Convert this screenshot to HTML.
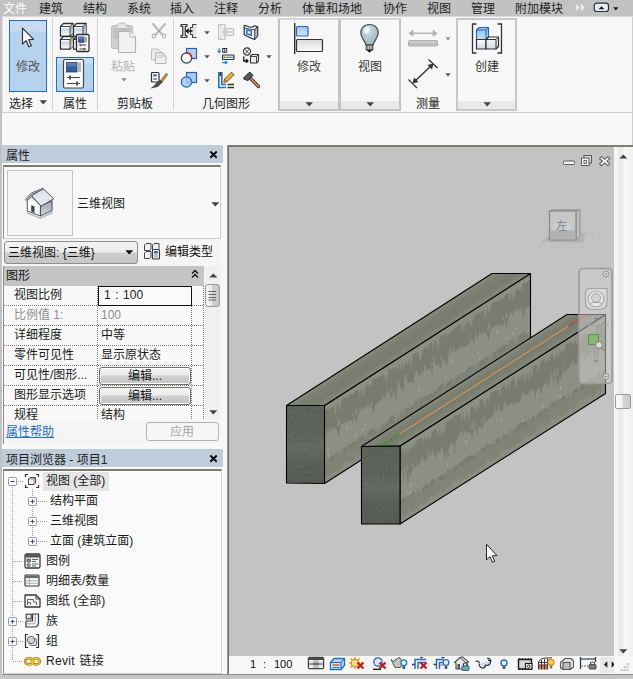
<!DOCTYPE html>
<html lang="zh-CN">
<head>
<meta charset="utf-8">
<title>Revit</title>
<style>
*{box-sizing:border-box;margin:0;padding:0}
html,body{width:633px;height:679px;overflow:hidden;background:#f0f0f0}
body{position:relative;font-family:"Liberation Sans","Noto Sans CJK SC",sans-serif;font-size:12px;color:#1a1a1a;line-height:1}
.abs{position:absolute}
.t{position:absolute;white-space:nowrap;font-size:12px;line-height:14px;height:14px}
/* menu bar */
#menubar{left:0;top:0;width:633px;height:17px;background:#c2c2c2;border-bottom:1px solid #d9d9d9;z-index:3}
#menubar .t{top:2px;color:#222}
/* ribbon */
#ribbon{left:0;top:16px;width:633px;height:97px;background:#f7f7f7;border-bottom:1px solid #cfcfcf}
.sep{position:absolute;top:2px;width:1px;height:92px;background:#d2d2d2}
.plabel{position:absolute;top:81px;font-size:12px;line-height:14px;white-space:nowrap;color:#222}
.cpanel{position:absolute;top:2px;height:93px;border:2px solid #c3c3c3;border-top:2px solid #d6d6d6;background:#f8f8f8}
.cstrip{position:absolute;left:0;right:0;bottom:0;height:8px;background:#e9e9e9}
.hl{position:absolute;left:0;width:200px;height:1px;background-image:linear-gradient(90deg,#7a7a7a 1px,transparent 1px);background-size:2px 1px}
.vl{position:absolute;top:0;height:140px;width:1px;background-image:linear-gradient(#7a7a7a 1px,transparent 1px);background-size:1px 2px}
.gbtn{position:absolute;left:95px;width:92px;height:18px;border:1px solid #70706a;border-radius:3px;background:linear-gradient(#f4f4f4 0,#ebebeb 7px,#d0d0d0 8px,#c6c6c6 100%);text-align:center;box-shadow:0 0 0 1px #fcfcfc inset}
.gbtn span{font-size:12px;line-height:14px;position:relative;top:1px;color:#111}
.vd{position:absolute;width:1px;background-image:linear-gradient(#9a9a9a 1px,transparent 1px);background-size:1px 2px}
.hd{position:absolute;height:1px;background-image:linear-gradient(90deg,#9a9a9a 1px,transparent 1px);background-size:2px 1px}
#optbar{left:0;top:113px;width:633px;height:32px;background:#f9f9f9}
/* panels */
.phead{position:absolute;left:2px;width:221px;height:18px;background:#bfccda;}
.phead .t{left:4px;top:4px;color:#1e1e1e}
.closex{position:absolute;left:207px;top:5px;width:9px;height:9px}
</style>
</head>
<body>
<!-- MENU BAR -->
<div id="menubar" class="abs">
  <span class="t" style="left:3px;color:#fff">文件</span>
  <span class="t" style="left:39px">建筑</span>
  <span class="t" style="left:83px">结构</span>
  <span class="t" style="left:127px">系统</span>
  <span class="t" style="left:170px">插入</span>
  <span class="t" style="left:214px">注释</span>
  <span class="t" style="left:258px">分析</span>
  <span class="t" style="left:302px">体量和场地</span>
  <span class="t" style="left:383px">协作</span>
  <span class="t" style="left:427px">视图</span>
  <span class="t" style="left:471px">管理</span>
  <span class="t" style="left:515px">附加模块</span>
  <svg class="abs" style="left:575px;top:3px" width="11" height="9" viewBox="0 0 11 9"><path d="M0.800 0.500 L4.800 4.500 L0.800 8.500 Z M5.800 0.500 L9.800 4.500 L5.800 8.500 Z" fill="#ececec"/></svg>
  <svg class="abs" style="left:593px;top:2px" width="17" height="11" viewBox="0 0 17 11"><rect x="1.200" y="1.200" width="14.300" height="8.300" rx="2.600" fill="#e6ecf3" stroke="#2a2f3a" stroke-width="1.200"/><path d="M5.500 7.200 H11.500 L8.500 4.200 Z" fill="#1a1e28"/></svg>
  <svg class="abs" style="left:613px;top:7px" width="6" height="4" viewBox="0 0 6 4"><path d="M0.200 0.200 H5.400 L2.800 3.400 Z" fill="#111"/></svg>
</div>
<!-- RIBBON -->
<div id="ribbon" class="abs">
  <!-- left edge -->
  <div class="abs" style="left:0;top:0;width:3px;height:96px;background:#e2e2e2"></div>
  <!-- Panel 1: select -->
  <div class="abs" style="left:9px;top:4px;width:38px;height:72px;border:1px solid #1e72cc;background:linear-gradient(#c8dcf0 0,#c8dcf0 10px,#b5d3ef 11px,#b5d3ef 100%)"></div>
  <svg class="abs" style="left:21px;top:11px" width="15" height="22" viewBox="0 0 15 22">
    <path d="M1.5 1.2 L1.5 17 L5.2 13.6 L7.8 19.8 L10.3 18.7 L7.7 12.7 L12.6 12.4 Z" fill="#fff" stroke="#333" stroke-width="1.2" stroke-linejoin="round"/>
  </svg>
  <span class="t" style="left:16px;top:44px;color:#555">修改</span>
  <span class="plabel" style="left:9px">选择</span>
  <svg class="abs" style="left:39px;top:84px" width="9" height="5" viewBox="0 0 9 5"><path d="M0.5 0.3 H8 L4.25 4.6 Z" fill="#444"/></svg>
  <div class="sep" style="left:52px"></div>

  <!-- Panel 2: properties -->
  <svg class="abs" style="left:59px;top:6px" width="32" height="32" viewBox="0 0 32 32">
    <defs>
      <linearGradient id="cb" x1="0" y1="0" x2="0" y2="1"><stop offset="0" stop-color="#ffffff"/><stop offset="0.300" stop-color="#c3d5ea"/><stop offset="0.550" stop-color="#dfe5ec"/><stop offset="1" stop-color="#f2f2f2"/></linearGradient>
      <linearGradient id="cs" x1="0" y1="0" x2="0" y2="1"><stop offset="0" stop-color="#9a9a9a"/><stop offset="1" stop-color="#e4e4e4"/></linearGradient>
    </defs>
    <path d="M14.5 17.5 L17.5 14.5 H27.0 V24.0 L24.0 27.0 H14.5 Z" fill="#fff" stroke="#2e2e2e" stroke-width="1.300" stroke-linejoin="round"/><rect x="15.1" y="18.1" width="8.3" height="8.3" fill="url(#cb)"/><path d="M24.0 17.5 L27.0 14.5 V24.0 L24.0 27.0 Z" fill="url(#cs)"/><path d="M14.5 17.5 H24.0 V27.0 M24.0 17.5 L27.0 14.5" fill="none" stroke="#2e2e2e" stroke-width="0.900"/>
    <path d="M1.5 17.5 L4.5 14.5 H14.0 V24.0 L11.0 27.0 H1.5 Z" fill="#fff" stroke="#2e2e2e" stroke-width="1.300" stroke-linejoin="round"/><rect x="2.1" y="18.1" width="8.3" height="8.3" fill="url(#cb)"/><path d="M11.0 17.5 L14.0 14.5 V24.0 L11.0 27.0 Z" fill="url(#cs)"/><path d="M1.5 17.5 H11.0 V27.0 M11.0 17.5 L14.0 14.5" fill="none" stroke="#2e2e2e" stroke-width="0.900"/>
    <path d="M14.5 4.5 L17.5 1.5 H27.0 V11.0 L24.0 14.0 H14.5 Z" fill="#fff" stroke="#2e2e2e" stroke-width="1.300" stroke-linejoin="round"/><rect x="15.1" y="5.1" width="8.3" height="8.3" fill="url(#cb)"/><path d="M24.0 4.5 L27.0 1.5 V11.0 L24.0 14.0 Z" fill="url(#cs)"/><path d="M14.5 4.5 H24.0 V14.0 M24.0 4.5 L27.0 1.5" fill="none" stroke="#2e2e2e" stroke-width="0.900"/>
    <path d="M1.5 4.5 L4.5 1.5 H14.0 V11.0 L11.0 14.0 H1.5 Z" fill="#fff" stroke="#2e2e2e" stroke-width="1.300" stroke-linejoin="round"/><rect x="2.1" y="5.1" width="8.3" height="8.3" fill="url(#cb)"/><path d="M11.0 4.5 L14.0 1.5 V11.0 L11.0 14.0 Z" fill="url(#cs)"/><path d="M1.5 4.5 H11.0 V14.0 M11.0 4.5 L14.0 1.5" fill="none" stroke="#2e2e2e" stroke-width="0.900"/>
    <rect x="17.500" y="12.500" width="12.500" height="17" rx="1.300" fill="#fbfbfb" stroke="#2e2e2e" stroke-width="1.300"/>
    <rect x="19.700" y="15" width="5.300" height="5.300" fill="#40609e" stroke="#22407a" stroke-width="0.800"/>
    <rect x="20" y="15.300" width="4.700" height="2" fill="#6f8fc8" opacity="0.700"/>
    <rect x="26" y="15" width="2" height="5.300" fill="#a8a8a8"/>
    <path d="M20.500 23 H27 M20.500 27 H27" stroke="#3a3a3a" stroke-width="1"/>
    <path d="M21.800 21.800 L20.600 23 L21.800 24.200 M25.200 25.800 V28.200" fill="none" stroke="#3a3a3a" stroke-width="1"/>
  </svg>
  <div class="abs" style="left:56px;top:41px;width:38px;height:35px;border:1px solid #1e72cc;background:linear-gradient(#c8dcf0 0,#c8dcf0 5px,#b5d3ef 6px,#b5d3ef 100%)"></div>
  <svg class="abs" style="left:62px;top:42px" width="23" height="32" viewBox="0 0 23 32">
    <rect x="1.500" y="1.500" width="20" height="28.500" rx="1.500" fill="#fbfbfb" stroke="#454545" stroke-width="1.200"/>
    <rect x="4.500" y="4.500" width="10.500" height="9.500" fill="#3b5c9c" stroke="#25427a" stroke-width="0.800"/>
    <rect x="4.900" y="4.900" width="9.700" height="3.500" fill="#6d8fc9" opacity="0.650"/>
    <rect x="16" y="4.500" width="3" height="9.500" fill="#b4b4b4"/>
    <path d="M5 19.500 H18 M5 25.500 H18" stroke="#4a4a4a" stroke-width="1.200"/>
    <path d="M8 17.500 V21.500 M15 23.500 V27.500" stroke="#4a4a4a" stroke-width="1.800"/>
  </svg>
  <span class="plabel" style="left:63px">属性</span>
  <div class="sep" style="left:97px"></div>

  <!-- Panel 3: clipboard -->
  <svg class="abs" style="left:110px;top:6px" width="28" height="34" viewBox="0 0 28 34">
    <rect x="1.500" y="3.500" width="21" height="23" rx="2" fill="#cfcfcf" stroke="#bdbdbd"/>
    <path d="M7 4.500 Q7 1 12 1 Q17 1 17 4.500 L18.500 4.500 V6.500 H5.500 V4.500 Z" fill="#e6e6e6" stroke="#b8b8b8"/>
    <rect x="3" y="7" width="18" height="10" fill="#bcbcbc" opacity="0.700"/>
    <path d="M8.500 9.500 H20 L25.500 15 V30.500 H8.500 Z" fill="#f1f1f1" stroke="#b4b4b4" stroke-width="1.200"/>
    <path d="M20 9.500 V15 H25.500" fill="#fafafa" stroke="#b4b4b4" stroke-width="1"/>
  </svg>
  <span class="t" style="left:111px;top:44px;color:#b4b4b4">粘贴</span>
  <svg class="abs" style="left:121px;top:62px" width="6" height="4" viewBox="0 0 6 4"><path d="M0.300 0.200 H5.700 L3 3.600 Z" fill="#8a8a8a"/></svg>
  <!-- scissors -->
  <svg class="abs" style="left:151px;top:7px" width="16" height="16" viewBox="0 0 16 16">
    <path d="M2 1 L12.500 13 M14 1 L3.500 13" stroke="#bdbdbd" stroke-width="2.200" stroke-linecap="round"/>
    <circle cx="3" cy="13" r="1.800" fill="#f4f4f4" stroke="#b5b5b5" stroke-width="1.200"/>
    <circle cx="13" cy="13" r="1.800" fill="#f4f4f4" stroke="#b5b5b5" stroke-width="1.200"/>
    <circle cx="8" cy="8" r="0.900" fill="#999"/>
  </svg>
  <!-- copy -->
  <svg class="abs" style="left:150px;top:31px" width="18" height="18" viewBox="0 0 18 18">
    <path d="M1.500 2 H8 L11 5 V13 H1.500 Z" fill="#ececec" stroke="#bcbcbc"/>
    <path d="M5.500 5.500 H12.500 L16 9 V16.500 H5.500 Z" fill="#f0f0f0" stroke="#b6b6b6"/>
    <path d="M12.500 5.500 V9 H16" fill="none" stroke="#b6b6b6"/>
    <rect x="6.500" y="6.500" width="6" height="5" fill="#dcdcdc"/>
  </svg>
  <!-- match type -->
  <svg class="abs" style="left:150px;top:55px" width="18" height="18" viewBox="0 0 18 18">
    <rect x="1.500" y="1.500" width="7.500" height="9.500" rx="1" fill="#f8f8f8" stroke="#2c2c2c" stroke-width="1.200"/>
    <rect x="3.300" y="3.300" width="3.500" height="2.200" fill="#3c6bb0"/>
    <path d="M3.300 8 H7 M5 7 V9" stroke="#556" stroke-width="0.900"/>
    <path d="M16.500 2 L10.500 9.500 L12.300 11 L17.500 4 Z" fill="#c98b3c" stroke="#7a5423" stroke-width="0.600"/>
    <path d="M10.500 9.500 L12.300 11 L8 15.500 L1.500 17 Q5 14.500 6.500 12 Z" fill="#4a4a4a" stroke="#2b2b2b" stroke-width="0.600"/>
  </svg>
  <span class="plabel" style="left:117px">剪贴板</span>
  <div class="sep" style="left:173px"></div>
  <!-- Panel 4: geometry -->
  <!-- cope -->
  <svg class="abs" style="left:180px;top:7px" width="18" height="17" viewBox="0 0 18 17">
    <path d="M1 1.500 H7 V3.500 H5.300 V12.500 H7 V14.500 H1 V12.500 H2.700 V3.500 H1 Z" fill="#d9d9d9" stroke="#333" stroke-width="1.100" stroke-linejoin="round"/>
    <path d="M16.500 1.500 H12.500 V4.500 H10.500 V11.500 H12.500 V14.500 H16.500" fill="#dfe6ee" stroke="#444" stroke-width="1.100"/>
    <path d="M12.500 8 H6.500 M8.800 5.600 L6.300 8 L8.800 10.400" fill="none" stroke="#111" stroke-width="1.300"/>
  </svg>
  <svg class="abs" style="left:204px;top:15px" width="6" height="4" viewBox="0 0 6 4"><path d="M0.300 0.200 H5.700 L3 3.600 Z" fill="#555"/></svg>
  <!-- cut (gray) -->
  <svg class="abs" style="left:217px;top:7px" width="18" height="18" viewBox="0 0 18 18">
    <path d="M1.500 1.500 H8 V5.500 H16.500 V12.500 H8 V16.500 H1.500 Z" fill="#ebebeb" stroke="#c2c2c2" stroke-width="1.100"/>
    <path d="M14.500 9 H6.500 M9.500 6 L6 9 L9.500 12" fill="none" stroke="#c6c6c6" stroke-width="1.600"/>
    <path d="M2 2 L8 9 L2 16" fill="none" stroke="#d6d6d6" stroke-width="0.800"/>
  </svg>
  <!-- wall joins -->
  <svg class="abs" style="left:243px;top:7px" width="17" height="18" viewBox="0 0 17 18">
    <path d="M1.200 2.300 Q4 2.600 7 4.200 Q9.500 4.600 11.700 2.800 L14.600 3.700 V12.900 L11.500 16.500 Q6 14.500 1.200 11.800 Z" fill="#eef1f5" stroke="#2a3344" stroke-width="1.200" stroke-linejoin="round"/>
    <path d="M11.700 6.800 V16.300 L14.600 12.900 V3.700 Z" fill="#b8bfca" stroke="#2a3344" stroke-width="0.900" stroke-linejoin="round"/>
    <path d="M1.200 4.800 Q6 6.500 11.700 6.800 L14.600 3.700" fill="none" stroke="#2a3344" stroke-width="0.900"/>
    <path d="M3.700 6.800 L8.400 8 V12.400 L3.700 11 Z" fill="#8fc0ee" stroke="#1a62b8" stroke-width="1.100" stroke-linejoin="round"/>
    <path d="M5 8.300 L7.200 8.900 V10.900 L5 10.300 Z" fill="#e6f0fa"/>
  </svg>
  <!-- cut geometry -->
  <svg class="abs" style="left:180px;top:31px" width="18" height="18" viewBox="0 0 18 18">
    <rect x="6.500" y="1.500" width="10" height="10" fill="#b4d2f0" stroke="#1c66c0" stroke-width="1.200"/>
    <circle cx="6.500" cy="11" r="5.200" fill="#fafafa" stroke="#2d3a4a" stroke-width="1.200"/>
    <path d="M6.500 5.800 A5.200 5.200 0 0 1 11.700 11" fill="none" stroke="#e11" stroke-width="1.400"/>
  </svg>
  <svg class="abs" style="left:204px;top:39px" width="6" height="4" viewBox="0 0 6 4"><path d="M0.300 0.200 H5.700 L3 3.600 Z" fill="#555"/></svg>
  <!-- beam joins -->
  <svg class="abs" style="left:217px;top:31px" width="18" height="18" viewBox="0 0 18 18">
    <path d="M2.200 1.200 V5.500 M0.700 3.800 L2.200 5.600 L3.700 3.800" fill="none" stroke="#1f8af0" stroke-width="1.300"/>
    <rect x="5.700" y="1.500" width="4" height="3.800" fill="#f4f4f4" stroke="#333" stroke-width="1"/>
    <path d="M7.700 1.500 V5.300" stroke="#333" stroke-width="0.900"/>
    <rect x="5.500" y="8" width="11.500" height="4.500" rx="0.500" fill="#ececec" stroke="#333" stroke-width="1.100"/>
    <path d="M6.500 10.250 H16.500" stroke="#222" stroke-width="0.900" stroke-dasharray="2 1"/>
    <path d="M5.300 15.500 H9.800 M8.200 14 L10 15.500 L8.200 17" fill="none" stroke="#1f8af0" stroke-width="1.300"/>
  </svg>
  <!-- split face -->
  <svg class="abs" style="left:242px;top:31px" width="18" height="18" viewBox="0 0 18 18">
    <circle cx="5" cy="4.500" r="3.600" fill="#f8f8f8" stroke="#333" stroke-width="1.100"/>
    <path d="M2.600 2.100 L7.400 6.900 M7.400 2.100 L2.600 6.900" stroke="#333" stroke-width="0.900"/>
    <path d="M8.500 9 L10.500 7.500 H16.500 V14 L14.500 16 H8.500 Z" fill="#e7ecf2" stroke="#333" stroke-width="1.100" stroke-linejoin="round"/>
    <path d="M8.500 9.500 H14.500 V16 M14.500 9.500 L16.500 7.500" fill="none" stroke="#333" stroke-width="0.900"/>
    <path d="M1.800 9.500 V14 H5.500 M4 12.300 L6 14 L4 15.700" fill="none" stroke="#111" stroke-width="1.300"/>
  </svg>
  <svg class="abs" style="left:266px;top:39px" width="6" height="4" viewBox="0 0 6 4"><path d="M0.300 0.200 H5.700 L3 3.600 Z" fill="#555"/></svg>
  <!-- join -->
  <svg class="abs" style="left:180px;top:55px" width="18" height="18" viewBox="0 0 18 18">
    <rect x="6.500" y="1.500" width="10" height="10" fill="#a9cdf0" stroke="#1c66c0" stroke-width="1.200"/>
    <circle cx="6.500" cy="11" r="5.200" fill="#a9cdf0" fill-opacity="0.850" stroke="#1c66c0" stroke-width="1.200"/>
    <path d="M6.500 6 V11.500 H11.500" fill="none" stroke="#7fb0e4" stroke-width="0.800"/>
  </svg>
  <svg class="abs" style="left:204px;top:63px" width="6" height="4" viewBox="0 0 6 4"><path d="M0.300 0.200 H5.700 L3 3.600 Z" fill="#555"/></svg>
  <!-- paint -->
  <svg class="abs" style="left:217px;top:55px" width="18" height="18" viewBox="0 0 18 18">
    <path d="M1.800 1 V16.500 H9" fill="none" stroke="#1f6fd0" stroke-width="1.600"/>
    <path d="M4.800 1 V13.500 H9" fill="none" stroke="#1f6fd0" stroke-width="1.600"/>
    <path d="M3.300 1 V5 " stroke="#333" stroke-width="1.400"/>
    <path d="M10.500 13.500 H17 M10.500 16.500 H17" stroke="#333" stroke-width="1.300"/>
    <path d="M14.500 1.200 L17 3.700 L10 10.700 L6.800 11.400 L7.500 8.200 Z" fill="#f2b13c" stroke="#6b4a12" stroke-width="0.900" stroke-linejoin="round"/>
    <path d="M7.500 8.200 L10 10.700" stroke="#6b4a12" stroke-width="0.800"/>
  </svg>
  <!-- hammer -->
  <svg class="abs" style="left:242px;top:55px" width="18" height="18" viewBox="0 0 18 18">
    <path d="M8.500 7.500 L16.500 15.500" stroke="#5b3422" stroke-width="3.400" stroke-linecap="round"/>
    <path d="M8.500 7.500 L16.500 15.500" stroke="#c48a72" stroke-width="1.600" stroke-linecap="round"/>
    <path d="M1.500 7 L7 1.500 Q8.500 1 9.500 2.500 L11 4.500 L5.500 10 L4 8.500 Q3 9.200 2.200 8.400 Z" fill="#4d5560" stroke="#222" stroke-width="0.900" stroke-linejoin="round"/>
  </svg>
  <span class="plabel" style="left:202px">几何图形</span>
  <!-- Collapsed panels -->
  <div class="cpanel" style="left:278px;width:62px"><div class="cstrip"></div></div>
  <svg class="abs" style="left:293px;top:6px" width="32" height="33" viewBox="0 0 32 33">
    <defs><linearGradient id="gr1" x1="0" y1="0" x2="0" y2="1"><stop offset="0" stop-color="#d8d8d8"/><stop offset="1" stop-color="#fbfbfb"/></linearGradient>
    <linearGradient id="bl1" x1="0" y1="0" x2="0" y2="1"><stop offset="0" stop-color="#9ec6ee"/><stop offset="1" stop-color="#d4e6f8"/></linearGradient></defs>
    <path d="M1.700 1 V32" stroke="#222" stroke-width="1.300"/>
    <rect x="3.500" y="4.500" width="11.500" height="9.500" rx="1" fill="url(#bl1)" stroke="#1c6ac6" stroke-width="1.200"/>
    <rect x="3.500" y="17.500" width="26" height="12" rx="1" fill="url(#gr1)" stroke="#333" stroke-width="1.200"/>
  </svg>
  <span class="t" style="left:297px;top:44px;color:#444">修改</span>
  <svg class="abs" style="left:305px;top:86px" width="9" height="5" viewBox="0 0 9 5"><path d="M0.500 0.300 H8 L4.250 4.600 Z" fill="#444"/></svg>

  <div class="cpanel" style="left:339px;width:62px"><div class="cstrip"></div></div>
  <svg class="abs" style="left:359px;top:7px" width="21" height="31" viewBox="0 0 21 31">
    <defs><radialGradient id="bulb" cx="0.400" cy="0.300" r="0.800"><stop offset="0" stop-color="#e9f1f4"/><stop offset="0.350" stop-color="#b7cdd4"/><stop offset="1" stop-color="#9bb7c0"/></radialGradient></defs>
    <path d="M10.500 1.500 C4.500 1.500 1.800 5.500 1.800 10 C1.800 15 6 17.500 7 22 H14 C15 17.500 19.200 15 19.200 10 C19.200 5.500 16.500 1.500 10.500 1.500 Z" fill="url(#bulb)" stroke="#3d4a50" stroke-width="1.200"/>
    <ellipse cx="7.500" cy="7" rx="2.500" ry="3.200" fill="#fff" opacity="0.700" transform="rotate(30 7.500 7)"/>
    <rect x="7.200" y="22" width="6.600" height="4.800" fill="#e8e8e8" stroke="#333" stroke-width="1"/>
    <path d="M8.800 22 V27 M10.500 22 V27 M12.200 22 V27" stroke="#555" stroke-width="0.800"/>
    <path d="M7.500 27 H13.500 L10.500 29.800 Z" fill="#222"/>
  </svg>
  <span class="t" style="left:358px;top:44px;color:#333">视图</span>
  <svg class="abs" style="left:366px;top:86px" width="9" height="5" viewBox="0 0 9 5"><path d="M0.500 0.300 H8 L4.250 4.600 Z" fill="#444"/></svg>

  <!-- measure -->
  <svg class="abs" style="left:407px;top:12px" width="32" height="20" viewBox="0 0 32 20">
    <path d="M5 5.300 H27" stroke="#b4b4b4" stroke-width="1.500"/>
    <path d="M1.500 5.300 L6.300 1.500 V9.100 Z M30.500 5.300 L25.700 1.500 V9.100 Z" fill="#b0b0b0"/>
    <rect x="1.500" y="12.500" width="29" height="5.500" rx="1" fill="#c0c0c0" stroke="#b0b0b0" stroke-width="1"/>
    <path d="M3 14 H29" stroke="#ececec" stroke-width="1" stroke-dasharray="2 1.200"/>
  </svg>
  <svg class="abs" style="left:445px;top:21px" width="6" height="4" viewBox="0 0 6 4"><path d="M0.300 0.200 H5.700 L3 3.600 Z" fill="#8a8a8a"/></svg>
  <svg class="abs" style="left:407px;top:41px" width="33" height="33" viewBox="0 0 33 33">
    <path d="M6.500 25.500 L25.500 7.500" stroke="#30363c" stroke-width="1.400"/>
    <path d="M1.500 22.500 L10 31 M21.500 2.500 L30.500 11" stroke="#30363c" stroke-width="1.300"/>
    <path d="M5.500 26.500 L7 20.500 L11.500 25 Z M26.500 6.500 L25 12.500 L20.500 8 Z" fill="#30363c"/>
  </svg>
  <svg class="abs" style="left:445px;top:57px" width="6" height="4" viewBox="0 0 6 4"><path d="M0.300 0.200 H5.700 L3 3.600 Z" fill="#555"/></svg>
  <span class="plabel" style="left:416px">测量</span>

  <div class="cpanel" style="left:456px;width:61px;border-color:#c8c8c8"><div class="cstrip"></div></div>
  <svg class="abs" style="left:470px;top:6px" width="34" height="33" viewBox="0 0 34 33">
    <defs><linearGradient id="cw" x1="0" y1="0" x2="0" y2="1"><stop offset="0" stop-color="#fcfcfc"/><stop offset="1" stop-color="#cfdae6"/></linearGradient>
    <linearGradient id="cbl" x1="0" y1="0" x2="0" y2="1"><stop offset="0" stop-color="#8fc0ee"/><stop offset="1" stop-color="#c4dcf4"/></linearGradient></defs>
    <path d="M6.500 2 H2.500 V31 H6.500 M27.500 2 H31.500 V31 H27.500" fill="none" stroke="#333" stroke-width="1.300"/>
    <path d="M6.500 8 L9 5.500 H18.500 V15 L16 17.500 H6.500 Z" fill="url(#cbl)" stroke="#1c6ac6" stroke-width="1.200" stroke-linejoin="round"/>
    <path d="M6.500 8 H16 V17.500 M16 8 L18.500 5.500" fill="none" stroke="#1c6ac6" stroke-width="1"/>
    <path d="M6.500 17.500 H16 V27 H6.500 Z" fill="url(#cw)" stroke="#333" stroke-width="1.200"/>
    <path d="M16 17.500 L18.500 15 H28.500 V24.500 L26 27 H16 Z" fill="url(#cw)" stroke="#333" stroke-width="1.200" stroke-linejoin="round"/>
    <path d="M16 17.500 H26 V27 M26 17.500 L28.500 15" fill="none" stroke="#333" stroke-width="1"/>
  </svg>
  <span class="t" style="left:475px;top:44px;color:#333">创建</span>
  <svg class="abs" style="left:483px;top:86px" width="9" height="5" viewBox="0 0 9 5"><path d="M0.500 0.300 H8 L4.250 4.600 Z" fill="#444"/></svg>
</div>
<div id="optbar" class="abs"></div>
<div class="abs" style="left:632px;top:16px;width:1px;height:129px;background:#cdcdcd"></div>
<div class="abs" style="left:0;top:0;width:2px;height:675px;background:#c2c2c2;z-index:5"></div>
<!-- PROPERTIES PANEL -->
<div id="props" class="abs" style="left:0;top:145px;width:227px;height:303px;background:#f8f8f8">
  <div class="abs" style="left:0;top:0;width:2px;height:303px;background:#c6c6c6"></div>
  <div class="phead" style="top:0"><span class="t">属性</span>
    <svg class="closex" viewBox="0 0 9 9"><path d="M1.300 1.500 L7.700 7.700 M7.700 1.500 L1.300 7.700" stroke="#0a0a0a" stroke-width="1.900"/></svg></div>
  <!-- panel inner bg -->
  <div class="abs" style="left:3px;top:20px;width:219px;height:279px;background:#f5f5f5"></div>
  <!-- type selector -->
  <div class="abs" style="left:3px;top:20px;width:218px;height:74px;background:#f9f9f9;border:1px solid #cfcfcf;border-top:2px solid #7b7b76;border-left:1px solid #8d8d8a"></div>
  <div class="abs" style="left:7px;top:25px;width:66px;height:66px;background:#f5f5f5;border:1px solid #c3c3c3"></div>
  <svg class="abs" style="left:15px;top:33px" width="50" height="50" viewBox="0 0 633 633">
    <defs><linearGradient id="hw" x1="0" y1="0" x2="0" y2="1"><stop offset="0" stop-color="#d5e3f2"/><stop offset="0.350" stop-color="#ffffff"/><stop offset="1" stop-color="#f1f3f6"/></linearGradient>
    <linearGradient id="hs" x1="0" y1="0" x2="0" y2="1"><stop offset="0" stop-color="#9ea7b2"/><stop offset="1" stop-color="#cdd3db"/></linearGradient>
    <linearGradient id="hr" x1="0" y1="0" x2="1" y2="1"><stop offset="0" stop-color="#cfdcec"/><stop offset="0.500" stop-color="#e6eaf0"/><stop offset="1" stop-color="#dfe3ea"/></linearGradient>
    <filter id="hb" x="-20%" y="-20%" width="140%" height="140%"><feGaussianBlur stdDeviation="9"/></filter></defs>
    <path d="M150 430 L320 500 L480 425 L480 445 L320 520 L150 450 Z" fill="#888" opacity="0.550" filter="url(#hb)"/>
    <path d="M155 285 L210 232 L322 350 L322 482 L155 418 Z" fill="url(#hw)" stroke="#3a4048" stroke-width="11" stroke-linejoin="round"/>
    <path d="M322 350 L470 288 L470 412 L322 482 Z" fill="url(#hs)" stroke="#3a4048" stroke-width="11" stroke-linejoin="round"/>
    <path d="M205 345 L247 358 L247 442 L205 425 Z" fill="#3d464e"/>
    <path d="M210 226 L355 135 L492 262 L330 356 Z" fill="url(#hr)" stroke="#3a4048" stroke-width="11" stroke-linejoin="round"/>
    <path d="M130 274 L207 190 L355 130 L362 142 L214 206 L142 284 Z" fill="#f2f2f2" stroke="#3a4048" stroke-width="10" stroke-linejoin="round"/>
  </svg>
  <span class="t" style="left:77px;top:52px;color:#222">三维视图</span>
  <svg class="abs" style="left:211px;top:57px" width="9" height="5" viewBox="0 0 9 5"><path d="M0.300 0.300 H8.300 L4.300 4.600 Z" fill="#444"/></svg>
  <!-- instance dropdown -->
  <div class="abs" style="left:4px;top:96px;width:134px;height:23px;border:1px solid #8e8e8a;border-radius:3px;background:linear-gradient(#f3f3f3 0,#ececec 10px,#cdcdcd 11px,#c6c6c6 100%)"></div>
  <span class="t" style="left:8px;top:101px;color:#111">三维视图: {三维}</span>
  <svg class="abs" style="left:125px;top:105px" width="9" height="5" viewBox="0 0 9 5"><path d="M0.300 0.300 H8.300 L4.300 4.600 Z" fill="#111"/></svg>
  <!-- edit type -->
  <svg class="abs" style="left:143px;top:97px" width="18" height="18" viewBox="0 0 18 18">
    <g fill="#eef1f5" stroke="#444" stroke-width="1" stroke-linejoin="round">
      <path d="M1.500 3 L3 1.500 H8 V7 L6.500 8.500 H1.500 Z"/><path d="M9.500 3 L11 1.500 H16 V7 L14.500 8.500 H9.500 Z"/><path d="M1.500 11 L3 9.500 H8 V15 L6.500 16.500 H1.500 Z"/>
    </g>
    <rect x="9.500" y="7.500" width="7" height="9.500" rx="1" fill="#fafafa" stroke="#333" stroke-width="1.100"/>
    <rect x="11" y="9" width="4" height="2.500" fill="#3c6bb0"/>
    <path d="M11 13 H15 M11 15 H15" stroke="#666" stroke-width="0.800"/>
  </svg>
  <span class="t" style="left:165px;top:100px;color:#111">编辑类型</span>
  <!-- grid -->
  <div class="abs" style="left:3px;top:121px;width:1px;height:178px;background:#8d8d8a"></div>
  <div class="abs" style="left:4px;top:121px;width:200px;height:20px;background:#c4c4c4"></div>
  <span class="t" style="left:6px;top:124px;color:#111">图形</span>
  <svg class="abs" style="left:191px;top:124px" width="8" height="10" viewBox="0 0 8 10"><path d="M1 4.500 L4 1.500 L7 4.500 M1 8.500 L4 5.500 L7 8.500" fill="none" stroke="#111" stroke-width="1.400"/></svg>
  <div id="grid" class="abs" style="left:4px;top:141px;width:200px;height:134px;background:#f9f9f9;overflow:hidden">
    <div class="hl" style="top:19px"></div><div class="hl" style="top:39px"></div><div class="hl" style="top:59px"></div>
    <div class="hl" style="top:79px"></div><div class="hl" style="top:99px"></div><div class="hl" style="top:119px"></div>
    <div class="vl" style="left:93px"></div><div class="vl" style="left:187px"></div><div class="vl" style="left:199px"></div>
    <span class="t" style="left:10px;top:2px">视图比例</span>
    <div class="abs" style="left:94px;top:0;width:94px;height:20px;border:1px solid #111;background:#fafafa"></div>
    <span class="t" style="left:100px;top:2px;word-spacing:1.200px">1 : 100</span>
    <span class="t" style="left:10px;top:22px;color:#8e8e8e">比例值 1:</span>
    <span class="t" style="left:97px;top:22px;color:#8e8e8e">100</span>
    <span class="t" style="left:10px;top:42px">详细程度</span>
    <span class="t" style="left:97px;top:42px">中等</span>
    <span class="t" style="left:10px;top:62px">零件可见性</span>
    <span class="t" style="left:97px;top:62px">显示原状态</span>
    <span class="t" style="left:10px;top:82px">可见性/图形...</span>
    <div class="gbtn" style="top:81px"><span>编辑...</span></div>
    <span class="t" style="left:10px;top:102px">图形显示选项</span>
    <div class="gbtn" style="top:101px"><span>编辑...</span></div>
    <span class="t" style="left:10px;top:122px">规程</span>
    <span class="t" style="left:97px;top:122px">结构</span>
  </div>
  <!-- scrollbar -->
  <div class="abs" style="left:205px;top:121px;width:15px;height:154px;background:#f0f0f0"></div>
  <svg class="abs" style="left:209px;top:128px" width="9" height="5" viewBox="0 0 9 5"><path d="M0.300 4.600 H8.300 L4.300 0.400 Z" fill="#444"/></svg>
  <div class="abs" style="left:205px;top:139px;width:15px;height:23px;border:1px solid #9a9a9a;border-radius:3px;background:linear-gradient(90deg,#f6f6f6 0,#e9e9e9 45%,#cfcfcf 50%,#c8c8c8 100%)"></div>
  <svg class="abs" style="left:208px;top:145px" width="9" height="11" viewBox="0 0 9 11"><path d="M0.500 1.500 H8 M0.500 4.500 H8 M0.500 7.500 H8 M0.500 10 H8" stroke="#666" stroke-width="1"/></svg>
  <svg class="abs" style="left:209px;top:265px" width="9" height="5" viewBox="0 0 9 5"><path d="M0.300 0.300 H8.300 L4.300 4.600 Z" fill="#444"/></svg>
  <!-- bottom -->
  <span class="t" style="left:6px;top:280px;color:#1b6ed2;text-decoration:underline">属性帮助</span>
  <div class="abs" style="left:146px;top:277px;width:73px;height:19px;border:1px solid #b4b4b4;border-radius:3px;background:#f6f6f6"></div>
  <span class="t" style="left:170px;top:280px;color:#a6a6a6">应用</span>
</div>
<!-- PROJECT BROWSER -->
<div id="browser" class="abs" style="left:0;top:448px;width:227px;height:231px;background:#f8f8f8">
  <div class="abs" style="left:0;top:0;width:2px;height:226px;background:#c6c6c6"></div>
  <div class="phead" style="top:1px"><span class="t">项目浏览器 - 项目1</span>
    <svg class="closex" viewBox="0 0 9 9"><path d="M1.300 1.500 L7.700 7.700 M7.700 1.500 L1.300 7.700" stroke="#0a0a0a" stroke-width="1.900"/></svg></div>
  <div class="abs" style="left:3px;top:21px;width:219px;height:205px;background:#fafafa;border:1px solid #d4d4d4;border-top:2px solid #7b7b76;border-left:1px solid #8d8d8a"></div>
  <div class="abs" style="left:0;top:226px;width:633px;height:1px;background:#8e8e8e"></div>
  <div class="abs" style="left:0;top:227px;width:633px;height:4px;background:#c6c6c6"></div>
  <!-- tree lines -->
  <div class="vd" style="left:12px;top:39px;height:174px"></div>
  <div class="vd" style="left:32px;top:41px;height:52px"></div>
  <div class="hd" style="left:18px;top:33px;width:6px"></div>
  <div class="hd" style="left:38px;top:53px;width:10px"></div>
  <div class="hd" style="left:38px;top:73px;width:10px"></div>
  <div class="hd" style="left:38px;top:93px;width:10px"></div>
  <div class="hd" style="left:13px;top:113px;width:10px"></div>
  <div class="hd" style="left:13px;top:133px;width:10px"></div>
  <div class="hd" style="left:13px;top:153px;width:10px"></div>
  <div class="hd" style="left:18px;top:173px;width:6px"></div>
  <div class="hd" style="left:18px;top:193px;width:6px"></div>
  <div class="hd" style="left:13px;top:213px;width:10px"></div>
  <svg class="abs" style="left:8px;top:29px" width="9" height="9" viewBox="0 0 9 9"><rect x="0.500" y="0.500" width="8" height="8" rx="1" fill="#fbfbfb" stroke="#9a9a9a"/><path d="M2.500 4.500 H6.500" stroke="#2c4f9e" stroke-width="1"/></svg>
  <svg class="abs" style="left:28px;top:49px" width="9" height="9" viewBox="0 0 9 9"><rect x="0.500" y="0.500" width="8" height="8" rx="1" fill="#fbfbfb" stroke="#9a9a9a"/><path d="M2.500 4.500 H6.500 M4.500 2.500 V6.500" stroke="#2c4f9e" stroke-width="1"/></svg>
  <svg class="abs" style="left:28px;top:69px" width="9" height="9" viewBox="0 0 9 9"><rect x="0.500" y="0.500" width="8" height="8" rx="1" fill="#fbfbfb" stroke="#9a9a9a"/><path d="M2.500 4.500 H6.500 M4.500 2.500 V6.500" stroke="#2c4f9e" stroke-width="1"/></svg>
  <svg class="abs" style="left:28px;top:89px" width="9" height="9" viewBox="0 0 9 9"><rect x="0.500" y="0.500" width="8" height="8" rx="1" fill="#fbfbfb" stroke="#9a9a9a"/><path d="M2.500 4.500 H6.500 M4.500 2.500 V6.500" stroke="#2c4f9e" stroke-width="1"/></svg>
  <svg class="abs" style="left:8px;top:169px" width="9" height="9" viewBox="0 0 9 9"><rect x="0.500" y="0.500" width="8" height="8" rx="1" fill="#fbfbfb" stroke="#9a9a9a"/><path d="M2.500 4.500 H6.500 M4.500 2.500 V6.500" stroke="#2c4f9e" stroke-width="1"/></svg>
  <svg class="abs" style="left:8px;top:189px" width="9" height="9" viewBox="0 0 9 9"><rect x="0.500" y="0.500" width="8" height="8" rx="1" fill="#fbfbfb" stroke="#9a9a9a"/><path d="M2.500 4.500 H6.500 M4.500 2.500 V6.500" stroke="#2c4f9e" stroke-width="1"/></svg>
  <!-- selection -->
  <div class="abs" style="left:43px;top:24px;width:66px;height:19px;background:#e5e5e5"></div>
  <!-- icons -->
  <svg class="abs" style="left:24px;top:25px" width="16" height="16" viewBox="0 0 16 16">
    <path d="M4 1.500 H1.500 V4 M12 1.500 H14.500 V4 M4 14.500 H1.500 V12 M12 14.500 H14.500 V12" fill="none" stroke="#333" stroke-width="1.200"/>
    <path d="M4.500 6 L6 4.500 H11.500 V10 L10 11.500 H4.500 Z" fill="#f4f4f4" stroke="#444" stroke-width="1" stroke-linejoin="round"/>
    <path d="M4.500 6 H10 V11.500 M10 6 L11.500 4.500" fill="none" stroke="#666" stroke-width="0.700"/>
  </svg>
  <svg class="abs" style="left:24px;top:105px" width="17" height="16" viewBox="0 0 17 16">
    <rect x="1" y="1" width="15" height="14" rx="1.500" fill="#f2f2f2" stroke="#3a3a3a" stroke-width="1.300"/>
    <rect x="1.500" y="1.500" width="14" height="3" fill="#555"/>
    <rect x="3" y="6" width="3.500" height="3" fill="#888" stroke="#444" stroke-width="0.600"/>
    <circle cx="4.700" cy="12" r="1.600" fill="#999" stroke="#444" stroke-width="0.600"/>
    <path d="M8 6.500 H14 M8 8.500 H12 M8 11 H14 M8 13 H12" stroke="#555" stroke-width="0.900"/>
  </svg>
  <svg class="abs" style="left:24px;top:126px" width="16" height="13" viewBox="0 0 16 13">
    <rect x="1" y="1" width="14" height="11" rx="1" fill="#fbfbfb" stroke="#3a3a3a" stroke-width="1.200"/>
    <rect x="1.500" y="1.500" width="13" height="2.600" fill="#6a6a6a"/>
    <path d="M1.500 6.600 H14.500 M1.500 9.200 H14.500 M5.500 4.200 V11.500" stroke="#9a9a9a" stroke-width="0.800"/>
  </svg>
  <svg class="abs" style="left:24px;top:146px" width="17" height="14" viewBox="0 0 17 14">
    <path d="M1 1 H12 L16 5 V13 H1 Z" fill="#f4f4f4" stroke="#3a3a3a" stroke-width="1.300" stroke-linejoin="round"/>
    <path d="M12 1 V5 H16" fill="none" stroke="#3a3a3a" stroke-width="1"/>
    <path d="M3.500 11 V5.500 H9.500 V8 H12.500 V11 M3.500 8.500 H6.500 V11" fill="none" stroke="#666" stroke-width="1"/>
  </svg>
  <svg class="abs" style="left:25px;top:165px" width="15" height="15" viewBox="0 0 15 15">
    <path d="M1 14 V8 H7.500 V1 H13.500 V9.500 Q13.500 14 9 14 Z" fill="#f6f6f6" stroke="#3a3a3a" stroke-width="1.200" stroke-linejoin="round"/>
    <rect x="1.200" y="1.200" width="5" height="4.600" fill="#e4e8ee" stroke="#3a3a3a" stroke-width="1.100"/>
    <path d="M10.300 1.500 V8.500 Q10.300 10.800 8 10.800 H1.500" fill="none" stroke="#9a9a9a" stroke-width="0.900"/>
  </svg>
  <svg class="abs" style="left:24px;top:185px" width="16" height="16" viewBox="0 0 16 16">
    <path d="M4 1.500 H1.500 V14.500 H4 M12 1.500 H14.500 V14.500 H12" fill="none" stroke="#333" stroke-width="1.200"/>
    <rect x="5.800" y="5.800" width="6.700" height="6.700" rx="1.500" fill="#e6e6e6" stroke="#666" stroke-width="1"/>
    <circle cx="7" cy="7" r="3.700" fill="#d4d4d4" fill-opacity="0.850" stroke="#666" stroke-width="1"/>
  </svg>
  <svg class="abs" style="left:24px;top:209px" width="17" height="9" viewBox="0 0 17 9">
    <rect x="1.200" y="1.400" width="8" height="6" rx="3" fill="none" stroke="#8a5e00" stroke-width="2.400"/>
    <rect x="7.800" y="1.400" width="8" height="6" rx="3" fill="none" stroke="#8a5e00" stroke-width="2.400"/>
    <rect x="1.200" y="1.400" width="8" height="6" rx="3" fill="none" stroke="#f4c020" stroke-width="1.300"/>
    <rect x="7.800" y="1.400" width="8" height="6" rx="3" fill="none" stroke="#f4c020" stroke-width="1.300"/>
    <path d="M6 4.400 H11" stroke="#f4c020" stroke-width="1.300"/>
  </svg>
  <!-- labels -->
  <span class="t" style="left:46px;top:26px">视图 (全部)</span>
  <span class="t" style="left:50px;top:46px">结构平面</span>
  <span class="t" style="left:50px;top:66px">三维视图</span>
  <span class="t" style="left:50px;top:86px">立面 (建筑立面)</span>
  <span class="t" style="left:46px;top:106px">图例</span>
  <span class="t" style="left:46px;top:126px">明细表/数量</span>
  <span class="t" style="left:46px;top:146px">图纸 (全部)</span>
  <span class="t" style="left:46px;top:166px">族</span>
  <span class="t" style="left:46px;top:186px">组</span>
  <span class="t" style="left:46px;top:206px;letter-spacing:0.300px;word-spacing:1px">Revit 链接</span>
</div>
<!-- VIEWPORT -->
<div id="viewport" class="abs" style="left:227px;top:145px;width:406px;height:529px;background:#c3c3c3">
  <div class="abs" style="left:0;top:0;width:406px;height:2px;background:#7d7d78"></div>
  <div class="abs" style="left:0;top:0;width:1px;height:529px;background:#9a9a94"></div><div class="abs" style="left:1px;top:1px;width:1px;height:528px;background:#6e6e68"></div>
  <svg class="abs" style="left:2px;top:2px" width="385" height="509" viewBox="229 147 385 509">
    <defs>
      <pattern id="side1" width="150" height="78" patternUnits="userSpaceOnUse" patternTransform="matrix(1 -0.64 0 1 324.500 405.500)">
      <g><rect width="150" height="78" fill="#787c6e"/><polygon fill="#8c9082" points="0,0 0.0,6.2 3.0,5.3 6.0,7.2 9.0,6.1 11.0,16.7 13.0,4.7 15.0,15.0 17.0,4.7 21.0,5.3 24.0,6.5 26.0,5.5 29.0,7.5 31.0,4.9 34.0,6.0 35.5,15.2 37.0,5.4 39.0,16.9 41.0,7.1 44.0,6.7 45.0,10.9 46.0,6.9 47.0,12.8 48.0,5.1 51.0,5.7 55.0,6.3 59.0,5.4 60.0,13.8 61.0,6.8 62.5,18.7 64.0,4.5 68.0,7.1 71.0,6.7 73.0,10.9 75.0,6.3 76.5,14.2 78.0,6.0 79.5,16.2 81.0,6.8 83.0,14.0 85.0,6.9 86.5,19.6 88.0,7.2 91.0,5.4 94.0,7.4 96.0,18.1 98.0,7.3 101.0,6.3 103.0,6.4 104.0,10.9 105.0,5.3 107.0,5.1 108.5,16.1 110.0,4.7 112.0,7.5 113.5,19.4 115.0,5.7 117.0,4.9 119.0,6.3 122.0,5.2 123.0,10.9 124.0,7.2 128.0,7.4 130.0,6.0 133.0,5.5 136.0,4.8 138.0,14.5 140.0,5.1 141.0,18.4 142.0,5.3 143.5,11.3 145.0,6.9 147.0,16.4 149.0,5.2 150.0,11.5 150.0,6.2 150,0"/><polygon fill="#8c9082" points="0.0,30.1 1.5,22.5 3.0,31.9 5.0,24.6 7.0,30.3 8.5,27.6 10.0,30.0 11.0,26.9 12.0,32.4 14.0,20.7 16.0,29.6 19.0,29.9 22.0,30.7 24.0,31.0 27.0,32.0 28.5,24.5 30.0,30.4 32.0,22.0 34.0,32.4 36.0,24.4 38.0,29.8 40.0,26.0 42.0,29.6 43.5,25.0 45.0,32.2 47.0,25.9 49.0,31.9 53.0,32.3 55.0,30.7 57.0,31.1 59.0,27.1 61.0,32.4 63.0,23.4 65.0,30.4 67.0,23.9 69.0,32.2 70.5,27.9 72.0,30.0 74.0,20.6 76.0,32.3 79.0,30.1 81.0,19.3 83.0,30.3 87.0,32.3 90.0,30.1 92.0,23.1 94.0,30.3 97.0,30.3 98.0,27.0 99.0,31.9 100.5,21.6 102.0,29.7 106.0,30.5 107.0,23.4 108.0,30.6 109.5,19.3 111.0,31.3 115.0,31.5 116.5,25.3 118.0,30.5 121.0,30.7 124.0,29.9 125.5,20.8 127.0,30.6 128.5,22.0 130.0,29.5 133.0,29.7 134.5,26.6 136.0,31.0 137.5,26.5 139.0,31.4 142.0,30.8 145.0,31.0 146.0,22.3 147.0,30.1 150.0,30.1 150.0,54.3 148.5,60.6 147.0,53.8 143.0,53.7 141.0,55.9 140.0,58.2 139.0,54.6 136.0,56.2 133.0,55.7 131.0,55.6 129.5,65.0 128.0,54.6 125.0,56.2 122.0,55.8 120.5,63.0 119.0,54.0 116.0,53.7 113.0,54.8 111.5,58.1 110.0,54.8 108.5,59.5 107.0,55.4 105.0,56.4 102.0,55.8 99.0,56.1 96.0,53.7 94.5,63.5 93.0,54.7 90.0,54.1 88.5,59.6 87.0,54.4 85.0,60.4 83.0,54.5 80.0,56.0 78.0,63.6 76.0,55.3 75.0,65.8 74.0,55.0 72.0,64.3 70.0,54.8 67.0,53.6 64.0,55.6 62.5,58.8 61.0,55.0 59.5,60.8 58.0,54.5 57.0,62.4 56.0,55.6 54.5,64.3 53.0,56.5 51.5,59.9 50.0,54.0 47.0,53.5 44.0,54.3 42.0,62.7 40.0,55.8 39.0,62.4 38.0,53.9 35.0,53.8 33.5,59.1 32.0,55.1 29.0,54.5 26.0,55.0 23.0,56.2 19.0,54.6 17.0,64.4 15.0,56.3 13.0,55.3 11.0,54.7 8.0,56.2 6.0,53.7 4.5,63.3 3.0,54.0 1.5,63.8 0.0,54.3"/><polygon fill="#787c6e" points="12,29 16,29 14.0,42.1"/><polygon fill="#787c6e" points="26,29 30,29 28.0,36.6"/><polygon fill="#787c6e" points="30,29 34,29 32.0,40.2"/><polygon fill="#787c6e" points="47,29 51,29 49.0,40.2"/><polygon fill="#787c6e" points="65,29 69,29 67.0,37.5"/><polygon fill="#787c6e" points="70,29 73,29 71.5,44.8"/><polygon fill="#787c6e" points="77,29 80,29 78.5,39.1"/><polygon fill="#787c6e" points="88,29 90,29 89.0,39.1"/><polygon fill="#787c6e" points="106,29 109,29 107.5,38.9"/><polygon fill="#787c6e" points="114,29 118,29 116.0,39.4"/><polygon fill="#787c6e" points="120,29 124,29 122.0,39.9"/><polygon fill="#787c6e" points="149,29 151,29 150.0,42.0"/><polygon fill="#808476" points="0.0,59.7 3.0,59.6 4.5,53.4 6.0,61.0 10.0,59.3 11.5,54.7 13.0,59.7 14.5,55.6 16.0,60.8 17.0,51.5 18.0,59.3 21.0,61.4 23.0,51.2 25.0,59.1 28.0,60.5 30.0,60.9 31.0,55.2 32.0,60.2 36.0,58.7 37.0,51.4 38.0,60.2 39.0,51.3 40.0,60.4 42.0,59.9 43.0,51.9 44.0,59.2 45.0,54.6 46.0,59.5 48.0,59.4 49.0,51.2 50.0,59.4 53.0,60.5 55.0,61.3 59.0,61.0 62.0,59.2 63.5,56.1 65.0,60.2 69.0,61.1 70.0,52.6 71.0,61.3 75.0,60.6 76.5,52.4 78.0,59.4 79.5,51.9 81.0,59.8 84.0,60.7 85.0,51.0 86.0,61.2 90.0,58.6 91.0,51.6 92.0,60.9 93.5,51.7 95.0,60.1 98.0,60.6 99.5,52.0 101.0,59.7 105.0,58.8 108.0,61.2 112.0,59.6 113.5,53.5 115.0,59.9 117.0,60.2 118.5,54.0 120.0,59.3 121.0,53.7 122.0,58.5 125.0,60.9 126.0,51.5 127.0,60.5 128.0,55.6 129.0,60.0 132.0,61.2 133.5,51.4 135.0,59.4 137.0,52.8 139.0,61.5 140.0,54.0 141.0,59.0 143.0,59.5 144.5,53.8 146.0,59.6 147.5,52.8 149.0,59.3 150.0,53.7 150.0,59.7 150,78 0,78"/><polygon fill="#8c9082" opacity="0.800" points="0.0,71.5 4.0,72.8 7.0,72.1 11.0,73.2 15.0,73.5 18.0,74.5 19.5,67.9 21.0,73.2 22.5,69.3 24.0,72.5 25.5,70.3 27.0,73.7 30.0,73.2 32.0,67.4 34.0,74.5 36.0,69.5 38.0,72.5 40.0,69.9 42.0,74.0 43.0,66.1 44.0,72.4 48.0,73.1 49.5,68.1 51.0,73.0 54.0,74.4 55.0,69.7 56.0,72.0 60.0,72.2 61.5,69.8 63.0,72.5 66.0,72.4 69.0,71.7 72.0,73.4 75.0,73.3 77.0,72.2 80.0,72.5 83.0,74.0 86.0,73.1 90.0,71.8 91.5,66.0 93.0,72.3 95.0,72.0 96.5,66.8 98.0,73.0 101.0,74.4 103.0,72.0 104.0,66.3 105.0,71.7 106.5,68.4 108.0,73.5 111.0,71.9 112.0,69.3 113.0,71.8 115.0,68.1 117.0,73.6 118.5,67.7 120.0,72.1 124.0,71.9 125.0,69.9 126.0,72.1 129.0,72.6 133.0,74.0 134.5,68.4 136.0,74.1 139.0,73.5 140.0,67.2 141.0,71.6 142.5,66.4 144.0,73.6 145.5,69.8 147.0,73.0 149.0,68.6 150.0,71.5 150,78 0,78"/><rect x="4" y="51" width="1" height="3" fill="#a6a8ae"/><rect x="38" y="47" width="1" height="3" fill="#a6a8ae"/><rect x="127" y="35" width="1" height="3" fill="#a6a8ae"/><rect x="3" y="45" width="1" height="3" fill="#a6a8ae"/><rect x="22" y="35" width="1" height="3" fill="#a6a8ae"/><rect x="31" y="48" width="1" height="3" fill="#a6a8ae"/><rect x="139" y="53" width="1" height="3" fill="#a6a8ae"/><rect x="94" y="43" width="1" height="3" fill="#a6a8ae"/><rect x="121" y="48" width="1" height="3" fill="#a6a8ae"/><rect x="41" y="44" width="1" height="3" fill="#a6a8ae"/></g>
      </pattern>
      <pattern id="side2" width="150" height="78" patternUnits="userSpaceOnUse" patternTransform="matrix(1 -0.64 0 1 400 446)">
      <g><rect width="150" height="78" fill="#787c6e"/><polygon fill="#8c9082" points="0,0 0.0,5.5 3.0,4.8 4.5,14.7 6.0,5.1 7.0,13.9 8.0,6.8 9.0,13.2 10.0,6.0 11.5,11.5 13.0,7.1 14.5,12.7 16.0,4.8 19.0,4.9 22.0,6.5 23.5,12.1 25.0,5.2 26.5,12.7 28.0,7.2 30.0,14.2 32.0,6.4 36.0,5.4 38.0,14.2 40.0,5.9 41.5,19.7 43.0,6.7 44.5,18.5 46.0,5.3 48.0,6.0 51.0,6.2 55.0,4.6 58.0,6.4 61.0,4.7 62.0,19.3 63.0,5.4 65.0,17.8 67.0,7.1 69.0,19.9 71.0,5.8 73.0,7.4 74.5,13.5 76.0,6.4 77.0,17.6 78.0,7.0 79.0,14.1 80.0,5.7 83.0,5.4 85.0,16.9 87.0,6.5 88.5,13.4 90.0,6.0 93.0,5.6 96.0,6.0 99.0,7.3 100.0,17.8 101.0,7.1 105.0,5.4 106.5,12.6 108.0,5.7 109.5,13.1 111.0,5.6 114.0,4.6 116.0,17.7 118.0,6.6 119.0,12.1 120.0,4.8 121.5,11.9 123.0,4.9 125.0,17.7 127.0,6.6 128.5,18.7 130.0,5.8 131.5,18.5 133.0,6.6 137.0,5.6 138.5,15.6 140.0,5.5 144.0,5.9 146.0,11.3 148.0,7.0 150.0,12.0 150.0,5.5 150,0"/><polygon fill="#8c9082" points="0.0,30.6 1.5,22.5 3.0,32.3 4.5,20.2 6.0,31.7 7.5,20.5 9.0,32.1 10.5,27.9 12.0,30.2 13.0,21.2 14.0,31.9 16.0,29.8 20.0,30.8 21.0,24.4 22.0,30.2 23.0,22.3 24.0,31.0 27.0,29.8 28.0,19.7 29.0,31.4 30.0,26.0 31.0,29.9 32.5,23.8 34.0,31.4 38.0,30.8 40.0,31.7 42.0,26.9 44.0,32.3 45.5,27.0 47.0,32.1 50.0,30.6 53.0,31.1 57.0,31.0 59.0,24.0 61.0,30.8 62.0,20.1 63.0,31.5 65.0,26.2 67.0,29.7 70.0,31.3 71.0,19.7 72.0,30.0 73.5,19.3 75.0,32.3 76.5,25.0 78.0,30.8 80.0,31.8 81.5,24.8 83.0,30.4 84.0,20.6 85.0,30.9 87.0,30.4 90.0,29.5 93.0,29.7 95.0,21.9 97.0,29.7 98.5,21.6 100.0,29.9 103.0,30.2 104.5,19.4 106.0,29.6 107.5,26.1 109.0,30.1 111.0,27.6 113.0,31.6 116.0,29.9 118.0,32.5 121.0,31.4 123.0,22.3 125.0,31.1 126.5,28.0 128.0,31.8 129.0,25.9 130.0,31.8 131.5,26.3 133.0,29.8 137.0,31.9 139.0,29.7 142.0,30.6 145.0,30.6 149.0,31.6 150.5,27.8 150.0,30.6 150.0,54.5 149.5,63.9 148.0,55.5 146.0,56.0 142.0,54.9 139.0,56.2 138.0,58.2 137.0,54.7 135.5,64.3 134.0,54.2 132.0,55.3 130.5,63.8 129.0,54.1 128.0,62.4 127.0,56.2 123.0,53.8 120.0,54.1 117.0,55.7 115.0,56.3 113.5,65.2 112.0,54.0 110.5,64.3 109.0,54.1 107.5,59.5 106.0,56.1 102.0,54.8 100.5,61.0 99.0,54.8 96.0,55.0 94.0,60.2 92.0,55.5 90.5,61.2 89.0,55.8 87.0,53.7 84.0,55.2 80.0,55.0 78.5,58.1 77.0,53.7 75.5,59.6 74.0,56.4 71.0,54.5 68.0,54.1 64.0,54.7 62.0,53.8 59.0,55.4 56.0,55.8 53.0,54.7 51.5,59.6 50.0,54.6 47.0,53.9 46.0,60.3 45.0,56.0 43.0,56.4 40.0,54.9 37.0,55.4 35.5,60.7 34.0,54.0 31.0,54.5 29.0,60.0 27.0,54.3 25.0,55.3 22.0,56.3 20.5,65.9 19.0,54.1 18.0,61.7 17.0,54.0 16.0,62.2 15.0,55.4 11.0,54.1 10.0,59.9 9.0,56.2 6.0,55.8 4.0,54.1 0.0,54.5"/><polygon fill="#787c6e" points="3,29 5,29 4.0,40.1"/><polygon fill="#787c6e" points="6,29 10,29 8.0,45.0"/><polygon fill="#787c6e" points="9,29 13,29 11.0,37.9"/><polygon fill="#787c6e" points="35,29 37,29 36.0,37.6"/><polygon fill="#787c6e" points="43,29 47,29 45.0,44.9"/><polygon fill="#787c6e" points="46,29 50,29 48.0,44.5"/><polygon fill="#787c6e" points="53,29 56,29 54.5,43.9"/><polygon fill="#787c6e" points="70,29 74,29 72.0,40.1"/><polygon fill="#787c6e" points="75,29 79,29 77.0,39.3"/><polygon fill="#787c6e" points="80,29 84,29 82.0,37.1"/><polygon fill="#787c6e" points="134,29 137,29 135.5,41.5"/><polygon fill="#787c6e" points="139,29 143,29 141.0,38.7"/><polygon fill="#787c6e" points="147,29 150,29 148.5,37.4"/><polygon fill="#808476" points="0.0,58.6 1.0,55.7 2.0,58.7 5.0,59.9 7.0,52.3 9.0,59.8 10.0,52.8 11.0,58.8 13.0,55.9 15.0,61.4 18.0,60.4 21.0,59.2 25.0,58.8 28.0,59.6 31.0,60.3 35.0,59.2 37.0,55.6 39.0,58.6 43.0,61.5 47.0,61.0 48.5,51.3 50.0,58.9 52.0,54.9 54.0,61.3 56.0,61.1 59.0,58.6 62.0,58.6 64.0,61.2 65.5,55.2 67.0,59.4 69.0,59.1 73.0,60.3 76.0,60.7 77.5,52.8 79.0,60.5 80.5,51.4 82.0,58.9 83.0,56.5 84.0,60.6 86.0,60.5 87.5,51.2 89.0,58.6 90.5,55.6 92.0,59.5 94.0,59.9 95.5,54.3 97.0,59.3 100.0,60.6 102.0,59.2 103.5,51.2 105.0,61.2 107.0,61.4 108.5,51.9 110.0,60.3 111.0,54.3 112.0,59.2 114.0,53.8 116.0,60.4 117.5,51.8 119.0,60.5 122.0,59.4 123.0,53.6 124.0,61.0 128.0,61.0 130.0,55.6 132.0,61.1 135.0,59.8 137.0,54.8 139.0,60.9 142.0,61.1 143.5,55.0 145.0,60.0 149.0,59.0 150.0,58.6 150,78 0,78"/><polygon fill="#8c9082" opacity="0.800" points="0.0,74.4 2.0,68.3 4.0,73.1 8.0,72.5 9.0,68.9 10.0,72.6 12.0,74.1 15.0,73.3 17.0,73.9 18.0,69.8 19.0,73.8 21.0,68.7 23.0,74.5 26.0,73.2 27.5,69.4 29.0,73.9 30.5,66.0 32.0,72.3 35.0,71.9 37.0,69.2 39.0,73.8 40.5,68.2 42.0,73.9 45.0,74.2 47.0,69.3 49.0,72.3 51.0,73.1 52.5,66.6 54.0,71.6 55.5,68.7 57.0,72.6 59.0,67.8 61.0,73.9 64.0,72.9 66.0,72.2 70.0,72.7 74.0,74.4 77.0,73.1 79.0,72.9 82.0,73.4 86.0,73.6 88.0,68.6 90.0,73.9 93.0,74.1 96.0,72.6 99.0,72.7 100.0,69.6 101.0,71.8 102.5,68.3 104.0,72.2 106.0,70.2 108.0,72.4 111.0,72.9 114.0,74.4 117.0,73.2 121.0,72.5 122.5,70.9 124.0,72.3 126.0,67.2 128.0,73.1 131.0,72.9 133.0,74.1 136.0,73.2 137.5,68.1 139.0,74.5 140.5,66.4 142.0,74.2 143.0,67.2 144.0,74.2 145.0,68.4 146.0,74.0 149.0,71.7 150.0,74.4 150,78 0,78"/><rect x="10" y="44" width="1" height="3" fill="#a6a8ae"/><rect x="101" y="37" width="1" height="3" fill="#a6a8ae"/><rect x="143" y="50" width="1" height="3" fill="#a6a8ae"/><rect x="47" y="49" width="1" height="3" fill="#a6a8ae"/><rect x="49" y="35" width="1" height="3" fill="#a6a8ae"/><rect x="66" y="37" width="1" height="3" fill="#a6a8ae"/><rect x="10" y="52" width="1" height="3" fill="#a6a8ae"/><rect x="7" y="50" width="1" height="3" fill="#a6a8ae"/><rect x="123" y="52" width="1" height="3" fill="#a6a8ae"/><rect x="136" y="35" width="1" height="3" fill="#a6a8ae"/></g>
      </pattern>
      <linearGradient id="top1" gradientUnits="userSpaceOnUse" x1="0" y1="-24.300" x2="0" y2="0" gradientTransform="matrix(1 -0.640 0 1 324.500 405.500)"><stop offset="0" stop-color="#878b7d"/><stop offset="0.300" stop-color="#7a7e71"/><stop offset="0.650" stop-color="#787c6f"/><stop offset="1" stop-color="#868a7b"/></linearGradient><linearGradient id="top2" gradientUnits="userSpaceOnUse" x1="0" y1="-24.300" x2="0" y2="0" gradientTransform="matrix(1 -0.640 0 1 400 446)"><stop offset="0" stop-color="#878b7d"/><stop offset="0.300" stop-color="#7a7e71"/><stop offset="0.650" stop-color="#787c6f"/><stop offset="1" stop-color="#868a7b"/></linearGradient><linearGradient id="cap" x1="0" y1="0" x2="0" y2="1"><stop offset="0" stop-color="#60655d"/><stop offset="0.350" stop-color="#62675f"/><stop offset="0.550" stop-color="#6b7067"/><stop offset="0.720" stop-color="#5f645c"/><stop offset="1" stop-color="#5a5f57"/></linearGradient>
      <filter id="noise" x="0" y="0" width="100%" height="100%">
        <feTurbulence type="fractalNoise" baseFrequency="0.35" numOctaves="2" seed="3" result="n"/>
        <feColorMatrix type="matrix" values="0 0 0 0 0  0 0 0 0 0  0 0 0 0 0  0.35 0.35 0 0 -0.22"/>
        <feComposite in2="SourceGraphic" operator="in"/>
      </filter>
    </defs>
    <!-- beam 1 -->
    <g stroke="#000" stroke-width="1.100" stroke-linejoin="round">
      <polygon points="324.500,405.500 530.500,273.500 530.500,352 324.500,483.500" fill="url(#side1)"/>
      <polygon points="286.500,405.500 492,273.500 530.500,273.500 324.500,405.500" fill="url(#top1)"/>
      <polygon points="286.500,405.500 324.500,405.500 324.500,483.500 286.500,483" fill="url(#cap)"/>
    </g>
    <polygon points="287.500,406.500 323.500,406.500 323.500,482.500 287.500,482" fill="#fff" filter="url(#noise)" opacity="0.350"/>
    
    <!-- beam 2 -->
    <g stroke="#000" stroke-width="1.100" stroke-linejoin="round">
      <polygon points="400,446 605.500,314.500 605.500,393.500 400,524" fill="url(#side2)"/>
      <polygon points="361.500,446.500 567,314.500 605.500,314.500 400,446" fill="url(#top2)"/>
      <polygon points="361.500,446.500 400,446 400,524 361.500,524" fill="url(#cap)"/>
    </g>
    <polygon points="362.500,447.500 399,447.500 399,523 362.500,523" fill="#fff" filter="url(#noise)" opacity="0.350"/>
    
    <!-- center line -->
    <path d="M381.500 445.500 L399.500 434" stroke="#16a016" stroke-width="1"/>
    <path d="M399.500 434 L568.500 326" stroke="#f09a4a" stroke-width="1"/>
    <path d="M568.500 326 L587 314.500" stroke="#e02020" stroke-width="1"/>
    <!-- view cube -->
    <ellipse cx="567.500" cy="240" rx="38" ry="7.500" fill="none" stroke="#b3b3b3" stroke-width="1" stroke-dasharray="2 4"/>
    <polygon points="541,242 552,233 586,233 583,243" fill="#b2b2b2" opacity="0.850"/>
    <polygon points="549.500,211 553,209.800 580,209.800 576,211" fill="#cdcdcd" stroke="#909090" stroke-width="0.900"/>
    <polygon points="576,211 580,209.800 580,236 576,240" fill="#bcbcbc" stroke="#909090" stroke-width="0.900"/>
    <rect x="549.500" y="211" width="26.500" height="29" fill="#c7c7c7" stroke="#8c8c8c" stroke-width="1.300"/>
    <rect x="550.200" y="230.500" width="25.200" height="8.800" fill="#b1b1b1"/>
    <rect x="554" y="222" width="17" height="8.500" fill="#c9d2dc" opacity="0.600"/>
    <text x="556" y="229.500" font-family="'Liberation Sans','Noto Sans CJK SC',sans-serif" font-size="11.500" fill="#7f8288">左</text>
    <!-- nav bar -->
    <rect x="579" y="268.500" width="33" height="115" rx="4" fill="#cfcfcf" fill-opacity="0.520" stroke="#9b9b9b" stroke-width="1.600"/>
    <circle cx="606" cy="274" r="3" fill="#d6d6d6" stroke="#999" stroke-width="1"/>
    <path d="M604.500 272.500 L607.500 275.500 M607.500 272.500 L604.500 275.500" stroke="#999" stroke-width="0.800"/>
    <path d="M590 288.500 H607 V302 Q607 309.500 599 309.500 H593 Q585.500 309.500 585.500 302 V293 Q585.500 288.500 590 288.500 Z" fill="#d9d9d9" stroke="#a2a2a2" stroke-width="1.100"/>
    <circle cx="596" cy="299" r="8" fill="#e6e6e6" stroke="#a6a6a6" stroke-width="1.100"/>
    <circle cx="596" cy="298" r="4.500" fill="#d2d2d2" stroke="#a6a6a6" stroke-width="1"/>
    <path d="M589.500 304 Q596 300 602.500 304" fill="none" stroke="#a6a6a6" stroke-width="1"/>
    <path d="M593.500 317.500 H598.500 L596 320.500 Z" fill="#8e8e8e"/>
    <path d="M583 325 H609" stroke="#a2a2a2" stroke-width="1"/>
    <rect x="588.500" y="334.500" width="10" height="10" fill="#86b872" stroke="#5d9348" stroke-width="1.100"/>
    <circle cx="599" cy="345" r="3.200" fill="#dcdcdc" stroke="#8a8a8a" stroke-width="1.100"/>
    <path d="M601.500 347.500 L604 350.500" stroke="#8a8a8a" stroke-width="1.400"/>
    <path d="M593.500 360 H598.500 L596 363 Z" fill="#8e8e8e"/>
    <circle cx="606" cy="376.500" r="2.800" fill="#d6d6d6" stroke="#999" stroke-width="1"/>
    <path d="M604.500 376.500 H607.500" stroke="#888" stroke-width="0.900"/>
    <!-- window controls -->
    <rect x="563.500" y="161" width="11" height="3.500" rx="0.800" fill="#f4f4f4" stroke="#5c5c5c" stroke-width="1"/>
    <rect x="584" y="155.500" width="7.500" height="7.500" fill="#d9d9d9" stroke="#5c5c5c" stroke-width="1"/>
    <rect x="581.500" y="158" width="7.500" height="7.500" fill="#f4f4f4" stroke="#5c5c5c" stroke-width="1"/>
    <rect x="584" y="160.500" width="2.500" height="3" fill="#f4f4f4" stroke="#5c5c5c" stroke-width="0.900"/>
    <path d="M601.500 158.500 L607.800 163.800 M607.800 158.500 L601.500 163.800" stroke="#5c5c5c" stroke-width="3.800" stroke-linecap="square"/>
    <path d="M601.500 158.500 L607.800 163.800 M607.800 158.500 L601.500 163.800" stroke="#f6f6f6" stroke-width="1.800" stroke-linecap="square"/>
    <!-- mouse cursor -->
    <path d="M486.500 544.300 V559.800 L490 556.600 L492.500 562.300 L494.700 561.300 L492.300 555.800 L497 555.600 Z" fill="#fff" stroke="#222" stroke-width="1" stroke-linejoin="round"/>
  </svg>
  <!-- vertical scrollbar -->
  <div class="abs" style="left:387px;top:2px;width:19px;height:509px;background:linear-gradient(90deg,#f6f6f6 0,#f6f6f6 3px,#ebebeb 4px,#ebebeb 9px,#f7f7f7 10px,#f1f1f1 100%)"></div>
  <svg class="abs" style="left:392px;top:9px" width="9" height="5" viewBox="0 0 9 5"><path d="M0.300 4.600 H8.300 L4.300 0.400 Z" fill="#444"/></svg>
  <div class="abs" style="left:388px;top:249px;width:16px;height:15px;border:1px solid #9b9b9b;border-radius:2px;background:linear-gradient(90deg,#fbfbfb 0,#f2f2f2 45%,#d4d4d4 50%,#cccccc 100%)"></div>
  <svg class="abs" style="left:392px;top:504px" width="9" height="5" viewBox="0 0 9 5"><path d="M0.300 0.300 H8.300 L4.300 4.600 Z" fill="#444"/></svg>
  <!-- status bar -->
  <div id="vstatus" class="abs" style="left:2px;top:511px;width:404px;height:18px;background:#f7f7f7">
    <span class="t" style="left:21px;top:1px;font-size:11px;color:#111">1</span><span class="t" style="left:34px;top:1px;font-size:11px;color:#111">:</span><span class="t" style="left:45px;top:1px;font-size:11px;color:#111">100</span>
    <svg class="abs" style="left:0;top:0" width="404" height="18" viewBox="229 656 404 18">
      <!-- 1 detail -->
      <rect x="308.500" y="657.500" width="15" height="11" rx="1" fill="#f4f4f4" stroke="#3e3e3e" stroke-width="1.400"/>
      <rect x="309" y="658" width="14" height="2" fill="#4a4a4a"/>
      <rect x="309.200" y="660" width="3.800" height="2.700" fill="#f4f4f4"/><rect x="313" y="660" width="6" height="2.700" fill="#c2c2c2"/><rect x="319" y="660" width="3.800" height="2.700" fill="#f4f4f4"/>
      <rect x="309.200" y="662.700" width="3.800" height="2.700" fill="#9c9c9c"/><rect x="313" y="662.700" width="6" height="2.700" fill="#6c6c6c"/><rect x="319" y="662.700" width="3.800" height="2.700" fill="#9c9c9c"/>
      <rect x="309.200" y="665.400" width="3.800" height="2.600" fill="#f4f4f4"/><rect x="313" y="665.400" width="6" height="2.600" fill="#c2c2c2"/><rect x="319" y="665.400" width="3.800" height="2.600" fill="#f4f4f4"/>
      <!-- 2 visual style -->
      <path d="M330.500 662.500 L334 658.500 H344.500 V665.500 L341 669.500 H330.500 Z" fill="#bcd8f2" stroke="#1c6ac6" stroke-width="1.300" stroke-linejoin="round"/>
      <path d="M330.500 662.500 H341 V669.500 M341 662.500 L344.500 658.500" fill="none" stroke="#1c6ac6" stroke-width="1.100"/>
      <rect x="331.500" y="663.500" width="8.500" height="5" fill="#e6f0fa"/>
      <path d="M332.500 665 H339.500" stroke="#e02020" stroke-width="1.200"/><path d="M332.500 667.500 H339.500" stroke="#18a038" stroke-width="1.200"/>
      <!-- 3 sun -->
      <g stroke="#e08a10" stroke-width="1.200"><path d="M355 656.700 V659 M355 667 V669.300 M348.700 663 H351 M359 663 H361.300 M350.500 658.500 L352 660 M359.500 658.500 L358 660 M350.500 667.500 L352 666"/></g>
      <circle cx="355" cy="663" r="3.700" fill="#fbe38a" stroke="#e08a10" stroke-width="1.200"/>
      <path d="M357.5 662.5 l6 6 m0 -6 l-6 6" stroke="#d01818" stroke-width="2.200"/>
      <!-- 4 shadows -->
      <circle cx="378" cy="662" r="4.200" fill="#d8e8f8" stroke="#1c6ac6" stroke-width="1.300"/>
      <path d="M373 669.300 H381" stroke="#222" stroke-width="1.400"/>
      <path d="M379.5 662.5 l6 6 m0 -6 l-6 6" stroke="#d01818" stroke-width="2.200"/>
      <!-- 5 teapot + bulb -->
      <path d="M391 659.500 L394 662 Q394.500 659 397 658.800 L398 657.800 H400 L400.500 659 Q402.500 660.500 402 664 L400.500 667.500 H395 Q393.500 665 392.500 662.500 Z" fill="#c4c4c4" stroke="#555" stroke-width="1" stroke-linejoin="round"/>
      <circle cx="403.800" cy="662.800" r="2.900" fill="#e6f1fc" stroke="#1c76d8" stroke-width="1.300"/>
      <rect x="402.500" y="666" width="2.600" height="3" fill="#555"/>
      <!-- 6 crop -->
      <path d="M415 669 V659.500 H426" fill="none" stroke="#1c6ac6" stroke-width="1.400"/>
      <path d="M418 669 V662.500 H426" fill="none" stroke="#1c6ac6" stroke-width="1.400"/>
      <path d="M412 664.500 H415" stroke="#444" stroke-width="1.600"/><path d="M420 657.500 H423" stroke="#444" stroke-width="1.200"/>
      <path d="M420.5 662.5 l6 6 m0 -6 l-6 6" stroke="#d01818" stroke-width="2.200"/>
      <!-- 7 show crop -->
      <path d="M436.500 669 V659.500 H444" fill="none" stroke="#1c6ac6" stroke-width="1.400"/>
      <path d="M439.500 669 V662.500 H443" fill="none" stroke="#1c6ac6" stroke-width="1.400"/>
      <path d="M433.500 664.500 H436.500" stroke="#444" stroke-width="1.600"/><path d="M441.500 657.500 H444.500" stroke="#444" stroke-width="1.200"/>
      <path d="M440.500 665 H443" stroke="#e02020" stroke-width="1"/>
      <circle cx="446" cy="662.500" r="2.900" fill="#e6f1fc" stroke="#1c76d8" stroke-width="1.300"/>
      <rect x="444.700" y="665.800" width="2.600" height="3.200" fill="#555"/>
      <!-- 8 house lock -->
      <path d="M454.500 662.500 L460 657.500 L462.500 656.800 L468.500 662 L467 663 L467 669 H456 V663 Z" fill="#e9e9e9" stroke="#4a4a4a" stroke-width="1.100" stroke-linejoin="round"/>
      <path d="M460 657.500 L466 663" stroke="#4a4a4a" stroke-width="1"/>
      <rect x="457.500" y="664" width="2.500" height="5" fill="#555"/>
      <path d="M463.500 666 V664.500 Q463.500 662.800 465.300 662.800 Q467.200 662.800 467.200 664.500 V666" fill="none" stroke="#333" stroke-width="1.100"/>
      <rect x="462" y="666" width="7" height="4.500" rx="0.600" fill="#62b0c8" stroke="#2a5868" stroke-width="0.900"/>
      <!-- 9 glasses -->
      <path d="M475.500 661.500 Q478 660 479.500 663 M487 658.500 Q490.500 658 491 661.500" fill="none" stroke="#333" stroke-width="1.200"/>
      <path d="M479 663.500 Q479.500 668.500 483.500 668 Q485.500 667.500 485.300 665 Q489 666.500 490.500 662.500 Q491 660 488 660.500" fill="#cfe2f6" stroke="#333" stroke-width="1.200" stroke-linejoin="round"/>
      <!-- 10 bulb -->
      <circle cx="504" cy="663" r="3" fill="#e6f1fc" stroke="#1c76d8" stroke-width="1.400"/>
      <rect x="502.700" y="666.200" width="2.600" height="2.800" fill="#555"/>
      <!-- 11 film -->
      <rect x="518.500" y="659.500" width="13" height="9.500" fill="#d6d6d6" stroke="#1a1a1a" stroke-width="1.400"/>
      <path d="M519 659 H532 M519 669.300 H532" stroke="#1a1a1a" stroke-width="1.600" stroke-dasharray="1.500 1.300"/>
      <rect x="525.500" y="663.500" width="6.500" height="5.500" fill="#f4f4f4" stroke="#1a1a1a" stroke-width="1.100"/>
      <circle cx="528.700" cy="666.300" r="1.300" fill="#fff" stroke="#1a1a1a" stroke-width="0.900"/>
      <!-- 12 analysis -->
      <path d="M538.500 669.500 V662 Q541 657.500 547 658 L552 657.800 M541.500 669.500 V660 M544.500 669.500 V659 M547.500 669.500 V658.500 M538.500 662.500 H548 M538.500 665 H548" fill="none" stroke="#3a3a3a" stroke-width="1"/>
      <path d="M540 665 V669.500 M543 665 V669.500 M546 665 V669.500" stroke="#c82010" stroke-width="1.300"/>
      <circle cx="551" cy="662.300" r="3" fill="#ffd24a" stroke="#e8901a" stroke-width="1.200"/>
      <rect x="549.800" y="665.500" width="2.400" height="3" fill="#777"/>
      <!-- 13 3d box -->
      <path d="M560.500 662.500 L565 658.500 H571 L573.500 661 M560.500 662.500 V667.500 L563 669.500 H570 L573.500 667 V661" fill="#e2e2e2" stroke="#555" stroke-width="1.100" stroke-linejoin="round"/>
      <rect x="563" y="662.500" width="7" height="7" fill="#bdbdbd" stroke="#555" stroke-width="1.100"/>
      <!-- 14 dim lock -->
      <path d="M580.500 657 V669 M595.500 657 V662" stroke="#2f3b52" stroke-width="1.300"/>
      <path d="M580.500 659 H595.500" stroke="#2f3b52" stroke-width="1.200"/>
      <path d="M581.500 666 H588" stroke="#555" stroke-width="1" stroke-dasharray="1.500 1.200"/>
      <path d="M590.500 664.500 V663.500 Q590.500 662 592.500 662 Q594.500 662 594.500 663.500 V664.500" fill="none" stroke="#444" stroke-width="1.100"/>
      <rect x="589" y="664.500" width="7" height="4.500" rx="0.600" fill="#7a7a7a" stroke="#444" stroke-width="0.900"/>
      <!-- 15 scroll buttons -->
      <rect x="600" y="657" width="14" height="16" fill="#e9e9e9"/>
      <path d="M607.300 661.300 V667.700 L603.800 664.500 Z" fill="#222"/>
      <path d="M611.600 661.300 V667.700 L614 665.500 V663.500 Z" fill="#222"/>
      <!-- 16 grip -->
      <g fill="#c2c2c2"><rect x="626.500" y="663" width="2" height="2"/><rect x="623.500" y="666" width="2" height="2"/><rect x="626.500" y="666" width="2" height="2"/><rect x="620.500" y="669" width="2" height="2"/><rect x="623.500" y="669" width="2" height="2"/><rect x="626.500" y="669" width="2" height="2"/></g>
    </svg>
  </div>
</div>
</body>
</html>
